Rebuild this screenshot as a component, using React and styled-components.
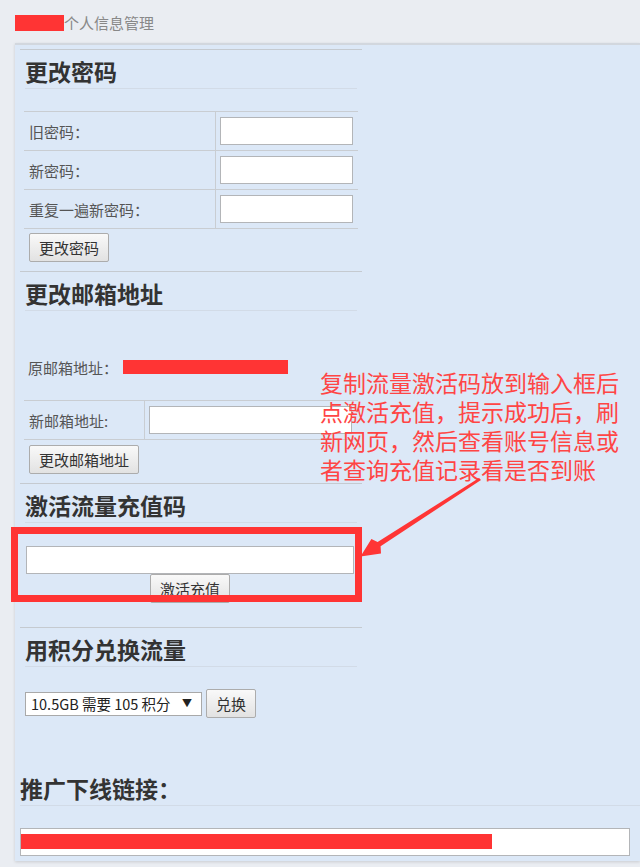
import React from 'react'
import styled, { createGlobalStyle } from 'styled-components'

const GlobalStyle = createGlobalStyle`
  body {
    margin: 0;
    background: #eaedf2;
    font-family: "Noto Sans CJK SC", "Liberation Sans", sans-serif;
    overflow: hidden;
  }
`

function App() {
  return (
    <Page>
      <GlobalStyle />
      <Header>
        <HeaderRedact />
        <span>个人信息管理</span>
      </Header>
      <Panel>
        <Column>
          <Section first>
            <Heading>更改密码</Heading>
            <FormTable top={22}>
              <tbody>
                <tr>
                  <LabelCell width={191}>旧密码：</LabelCell>
                  <InputCell><TextInput type="password" w={133} /></InputCell>
                </tr>
                <tr>
                  <LabelCell width={191}>新密码：</LabelCell>
                  <InputCell><TextInput type="password" w={133} /></InputCell>
                </tr>
                <tr>
                  <LabelCell width={191}>重复一遍新密码：</LabelCell>
                  <InputCell><TextInput type="password" w={133} /></InputCell>
                </tr>
              </tbody>
            </FormTable>
            <ButtonRow>
              <Button>更改密码</Button>
            </ButtonRow>
          </Section>

          <Section>
            <Heading>更改邮箱地址</Heading>
            <OrigRow>
              原邮箱地址：<Redact />
            </OrigRow>
            <FormTable top={0}>
              <tbody>
                <tr>
                  <LabelCell width={120}>新邮箱地址:</LabelCell>
                  <InputCell><TextInput w={203} /></InputCell>
                </tr>
              </tbody>
            </FormTable>
            <ButtonRow top={5}>
              <Button>更改邮箱地址</Button>
            </ButtonRow>
          </Section>

          <Section>
            <Heading>激活流量充值码</Heading>
            <ActivateForm>
              <TextInput w={328} />
              <Button>激活充值</Button>
            </ActivateForm>
          </Section>

          <Section>
            <Heading>用积分兑换流量</Heading>
            <ExchangeRow>
              <SelectWrap>
                <Select defaultValue="105">
                  <option value="105">10.5GB 需要 105 积分</option>
                </Select>
                <Caret>▼</Caret>
              </SelectWrap>
              <Button>兑换</Button>
            </ExchangeRow>
          </Section>
        </Column>

        <LinkSection>
          <Heading wide>推广下线链接：</Heading>
          <LinkBox>
            <LinkRedact />
          </LinkBox>
        </LinkSection>
      </Panel>

      <RedFrame />
      <Note>
        <span>复制流量激活码放到输入框后</span>
        <span>点激活充值，提示成功后，刷</span>
        <span>新网页，然后查看账号信息或</span>
        <span>者查询充值记录看是否到账</span>
      </Note>
      <Arrow width="140" height="100" viewBox="350 470 140 100">
        <polygon
          points="479,478 377.6,541.9 371.4,539 360.5,556.5 381,553.5 380.6,546.2 481,480"
          fill="#ff3535"
        />
      </Arrow>
    </Page>
  )
}

export default App

const Page = styled.div`
  position: relative;
  padding-left: 15px;
  padding-bottom: 8px;
`

const Header = styled.div`
  box-sizing: border-box;
  height: 43px;
  padding-top: 14px;
  display: flex;
  align-items: flex-start;
  font-size: 15px;
  line-height: 18px;
  color: #888;
`

const HeaderRedact = styled.div`
  width: 49px;
  height: 16px;
  margin-top: 1px;
  background: #ff3434;
`

const Panel = styled.div`
  background: #dce8f7;
  border-top: 2px solid #d2d7de;
  box-shadow: 0 1px 3px rgba(0, 0, 0, 0.14);
  padding: 0 10px 5px 5px;
`

const Column = styled.div`
  width: 342px;
`

const Section = styled.div`
  border-top: 1px solid #c5cad0;
  margin-top: ${props => props.first ? '4px' : '0'};
`

const Heading = styled.h2`
  margin: ${props => props.wide ? '0 -10px 0 0' : '0 5px'};
  padding: ${props => props.wide ? '8px 0 4px' : '9px 0 4px'};
  font-size: 23px;
  line-height: 25px;
  font-weight: bold;
  color: #333;
  border-bottom: 1px solid #d2dbe7;
`

const FormTable = styled.table`
  border-collapse: collapse;
  margin: ${props => props.top}px 4px 0;
  width: 334px;
  td {
    border-top: 1px solid #c9cdd2;
    border-bottom: 1px solid #c9cdd2;
  }
`

const LabelCell = styled.td`
  box-sizing: border-box;
  padding: 0 5px;
  height: 38px;
  font-size: 15px;
  color: #555;
  border-right: 1px solid #c9cdd2;
`

const InputCell = styled.td`
  padding: 5px 4px;
`

const TextInput = styled.input`
  display: block;
  box-sizing: border-box;
  width: ${props => props.w}px;
  height: 28px;
  margin: 0;
  border: 1px solid #b3b5b8;
  background: #fff;
`

const ButtonRow = styled.div`
  margin-top: ${props => props.top ?? 4}px;
  margin-bottom: 9px;
  padding-left: 9px;
`

const Button = styled.button`
  box-sizing: border-box;
  height: 29px;
  padding: 0 9px;
  border: 1px solid #acacac;
  border-radius: 2px;
  background: linear-gradient(#f9f9f9, #e2e2e2);
  font-family: "Noto Sans CJK SC", sans-serif;
  font-size: 15px;
  line-height: 27px;
  color: #333;
`

const OrigRow = styled.div`
  display: flex;
  align-items: center;
  padding: 46px 0 23px 8px;
  height: 20px;
  font-size: 15px;
  color: #555;
`

const Redact = styled.span`
  display: inline-block;
  width: 165px;
  height: 14px;
  margin-left: 5px;
  background: #ff3434;
`

const ActivateForm = styled.div`
  display: flex;
  flex-direction: column;
  align-items: center;
  margin: 23px 0 24px;
  padding-right: 2px;
`

const ExchangeRow = styled.div`
  display: flex;
  align-items: center;
  gap: 4px;
  margin-top: 22px;
  padding-left: 5px;
`

const SelectWrap = styled.div`
  position: relative;
`

const Select = styled.select`
  display: block;
  appearance: none;
  box-sizing: border-box;
  width: 177px;
  height: 24px;
  padding: 0 5px;
  border: 1px solid #a9a9a9;
  background: #fff;
  font-family: "Noto Sans CJK SC", sans-serif;
  font-size: 14.5px;
  color: #222;
`

const Caret = styled.span`
  position: absolute;
  right: 10px;
  top: 5px;
  font-size: 10px;
  line-height: 12px;
  color: #222;
  pointer-events: none;
`

const LinkSection = styled.div`
  margin-top: 50px;
`

const LinkBox = styled.div`
  box-sizing: border-box;
  height: 28px;
  margin-top: 22px;
  padding-top: 5px;
  border: 1px solid #b3b5b8;
  background: #fff;
`

const LinkRedact = styled.div`
  width: 471px;
  height: 15px;
  background: #ff3434;
`

const RedFrame = styled.div`
  position: absolute;
  left: 11px;
  top: 527px;
  width: 351px;
  height: 75px;
  box-sizing: border-box;
  border: 7px solid #ff3434;
`

const Note = styled.div`
  position: absolute;
  left: 320px;
  top: 368px;
  font-size: 23px;
  line-height: 29px;
  color: #ff4545;
  white-space: nowrap;
  span {
    display: block;
  }
`

const Arrow = styled.svg`
  position: absolute;
  left: 350px;
  top: 470px;
`
